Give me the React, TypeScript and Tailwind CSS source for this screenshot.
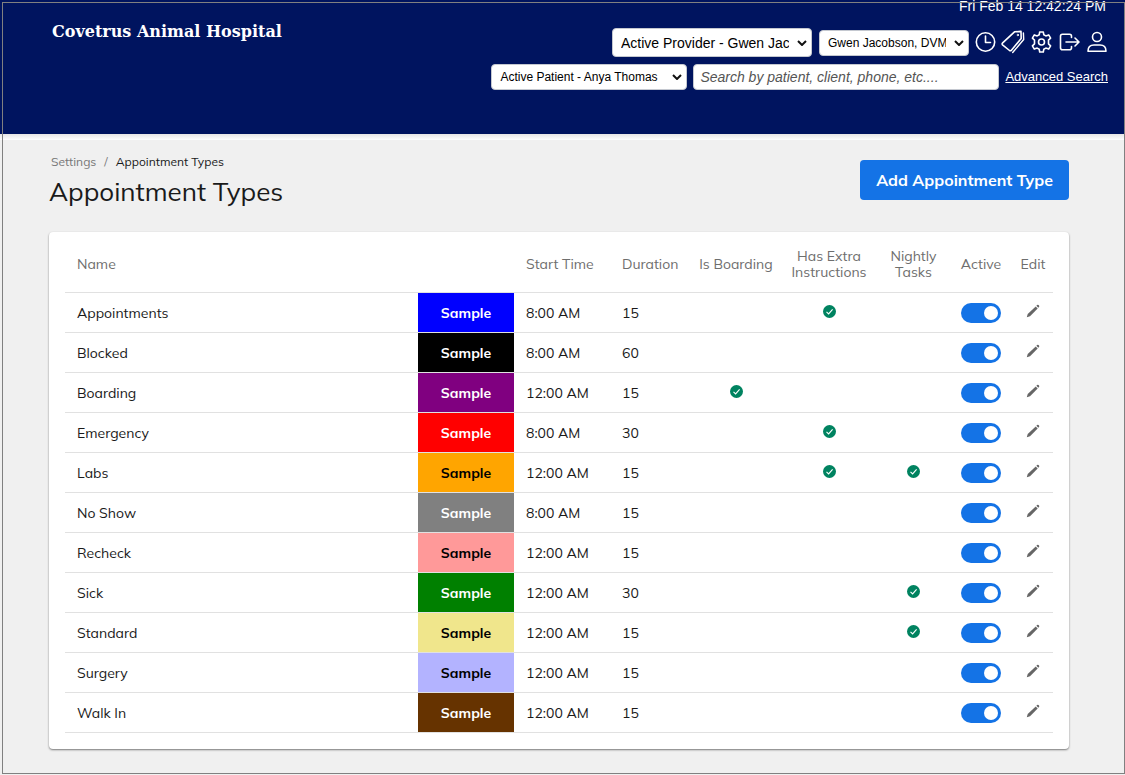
import { ReactNode, useState } from "react";
import clsx from "clsx";

type AppointmentType = {
  name: string;
  color: string;
  start: string;
  duration: number;
  boarding?: boolean;
  extra?: boolean;
  nightly?: boolean;
};

const appointmentTypes: AppointmentType[] = [
  { name: "Appointments", color: "bg-[#0000ff] text-white", start: "8:00 AM", duration: 15, extra: true },
  { name: "Blocked", color: "bg-black text-white", start: "8:00 AM", duration: 60 },
  { name: "Boarding", color: "bg-[#800080] text-white", start: "12:00 AM", duration: 15, boarding: true },
  { name: "Emergency", color: "bg-[#ff0000] text-white", start: "8:00 AM", duration: 30, extra: true },
  { name: "Labs", color: "bg-[#ffa500] text-black", start: "12:00 AM", duration: 15, extra: true, nightly: true },
  { name: "No Show", color: "bg-[#808080] text-white", start: "8:00 AM", duration: 15 },
  { name: "Recheck", color: "bg-[#ff9999] text-black", start: "12:00 AM", duration: 15 },
  { name: "Sick", color: "bg-[#008000] text-white", start: "12:00 AM", duration: 30, nightly: true },
  { name: "Standard", color: "bg-[#f0e68c] text-black", start: "12:00 AM", duration: 15, nightly: true },
  { name: "Surgery", color: "bg-[#b3b3ff] text-black", start: "12:00 AM", duration: 15 },
  { name: "Walk In", color: "bg-[#663300] text-white", start: "12:00 AM", duration: 15 },
];

function HeaderSelect({ label, option, className }: { label: string; option: string; className: string }) {
  return (
    <div className={clsx("relative", className)}>
      <select
        aria-label={label}
        className="h-full w-full appearance-none overflow-hidden rounded border border-[#c4c8d0] bg-white pl-2 pr-[22px] text-black"
      >
        <option>{option}</option>
      </select>
      <svg viewBox="0 0 10 6" className="pointer-events-none absolute right-[5px] top-1/2 h-[6px] w-[10px] -translate-y-1/2">
        <path d="M1 1l4 4 4-4" fill="none" stroke="#111" strokeWidth="2" />
      </svg>
    </div>
  );
}

function IconButton({ label, children }: { label: string; children: ReactNode }) {
  return (
    <button type="button" aria-label={label} className="flex h-6 w-6 items-center justify-center">
      <svg
        viewBox="0 0 24 24"
        className="h-6 w-6"
        fill="none"
        stroke="#fff"
        strokeWidth="1.6"
        strokeLinejoin="round"
        strokeLinecap="round"
      >
        {children}
      </svg>
    </button>
  );
}

function HeaderIcons() {
  return (
    <div className="-ml-[3px] flex items-center gap-1 pb-[2px]">
      <IconButton label="Time clock">
        <circle cx="12.500" cy="12" r="9.200" />
        <path d="M12.500 6v6.500h5" />
      </IconButton>
      <IconButton label="Tags">
        <path d="M13.500 1.800L20 1.400l.2 7-10 12a1.200 1.200 0 0 1-1.700.1L1.500 14.900a1.200 1.200 0 0 1-.1-1.700z" />
        <circle cx="16.800" cy="5" r=".7" strokeWidth="1" />
        <path d="M22.400 3l.3 6.500-11 13" strokeWidth="1.400" />
      </IconButton>
      <IconButton label="Settings">
        <circle cx="12.500" cy="12" r="3" />
        <path d="M10.700 2h3.600l.5 2.800 2 1.100 2.900-1 1.900 3.300-2.100 2v3.600l2.100 2-1.900 3.300-2.900-1-2 1.100-.5 2.800h-3.600l-.5-2.800-2-1.100-2.900 1-1.900-3.300 2.100-2v-3.600l-2.100-2 1.900-3.300 2.900 1 2-1.100z" />
      </IconButton>
      <IconButton label="Log out">
        <path d="M14.500 7.500V6.300a2 2 0 0 0-2-2H5.500a2 2 0 0 0-2 2v11.400a2 2 0 0 0 2 2h7a2 2 0 0 0 2-2v-1.200" />
        <path d="M9 12h12.500M18 8l4 4-4 4" />
      </IconButton>
      <IconButton label="My profile">
        <circle cx="12" cy="7" r="4.500" />
        <path d="M3 21.200c0-4 2.500-6.200 6-6.200h6c3.500 0 6 2.200 6 6.200z" />
      </IconButton>
    </div>
  );
}

function Check({ label }: { label: string }) {
  return (
    <svg viewBox="0 0 13 13" role="img" aria-label={label} className="mx-auto mb-1 h-[13px] w-[13px]">
      <circle cx="6.500" cy="6.500" r="6.500" fill="#008360" />
      <path d="M3.500 6.800l2.100 2.100 4-4.600" fill="none" stroke="#fff" strokeWidth="1.100" />
    </svg>
  );
}

function Pencil() {
  return (
    <svg viewBox="0 0 14 14" className="h-[14px] w-[14px]" fill="#666">
      <path d="M.8 13.200l.9-3.100L9.700 2.400l2 2L4 12.200z" />
      <path d="M10.400 1.800l.7-.7a1 1 0 0 1 1.400 0l.5.500a1 1 0 0 1 0 1.400l-.7.700z" />
    </svg>
  );
}

function ActiveSwitch({ name }: { name: string }) {
  const [active, setActive] = useState(true);

  return (
    <label className="relative mx-auto block h-5 w-10">
      <input
        type="checkbox"
        role="switch"
        aria-label={`${name} active`}
        checked={active}
        onChange={() => setActive(!active)}
        className="peer block h-5 w-10 cursor-pointer appearance-none rounded-full bg-gray-400 checked:bg-[#1473e6]"
      />
      <span className="pointer-events-none absolute left-[3px] top-[3px] h-[14px] w-[14px] rounded-full bg-white peer-checked:left-[23px]" />
    </label>
  );
}

export default function App() {
  return (
    <div className="relative min-h-screen bg-[#f0f0f0] font-['Mulish','Lato',sans-serif] text-[#1a1a1a]">
      <div className="pointer-events-none absolute inset-0 mb-px ml-[2px] mt-[2px] border border-[#808080]" />

      <header className="flex h-[134px] items-start justify-between bg-[#00145f] pl-[52px] pr-4 text-white">
        <h2 className="pt-5 font-['Rockwell','DejaVu_Serif',serif] text-base font-bold leading-6">
          Covetrus Animal Hospital
        </h2>

        <div className="flex flex-col items-end font-['Liberation_Sans',Arial,sans-serif]">
          <time className="pr-[3px] text-sm leading-3">Fri Feb 14 12:42:24 PM</time>

          <div className="mt-4 flex items-center gap-[7px]">
            <HeaderSelect
              label="Active provider"
              option="Active Provider - Gwen Jacobson"
              className="h-[29px] w-[200px] text-sm"
            />
            <HeaderSelect label="User" option="Gwen Jacobson, DVM" className="h-[26px] w-[150px] text-xs" />
            <HeaderIcons />
          </div>

          <div className="mt-[7px] flex items-center gap-[6px] pr-px">
            <HeaderSelect
              label="Active patient"
              option="Active Patient - Anya Thomas"
              className="h-[26px] w-[196px] text-xs"
            />
            <input
              type="search"
              aria-label="Search"
              placeholder="Search by patient, client, phone, etc...."
              className="h-[26px] w-[306px] rounded border border-[#c4c8d0] bg-white px-[6px] text-sm italic text-black placeholder:text-[#555]"
            />
            <a href="#advanced" className="text-[13px] leading-5 underline">
              Advanced Search
            </a>
          </div>
        </div>
      </header>

      <div className="h-[6px] bg-linear-to-b from-[#e6e6e6] to-white" />

      <main className="pl-[49px] pr-14">
        <div className="flex items-start justify-between pt-[14px]">
          <div>
            <nav aria-label="Breadcrumb" className="flex gap-2 pl-[2px] text-xs leading-4">
              <a href="#settings" className="text-[#777]">Settings</a>
              <span className="text-[#777]">/</span>
              <span>Appointment Types</span>
            </nav>
            <h1 className="text-[26px] leading-[44px]">Appointment Types</h1>
          </div>

          <button type="button" className="mt-[6px] h-10 rounded bg-[#1473e6] px-4 text-base font-bold text-white">
            Add Appointment Type
          </button>
        </div>

        <div className="mt-[18px] rounded bg-white px-4 pb-4 pt-1 shadow-[0_1px_2px_rgba(0,0,0,0.5)]">
          <table className="w-full table-fixed border-collapse text-sm leading-4">
            <colgroup>
              <col />
              <col className="w-24" />
              <col className="w-24" />
              <col className="w-[82px]" />
              <col className="w-[88px]" />
              <col className="w-[98px]" />
              <col className="w-[71px]" />
              <col className="w-16" />
              <col className="w-10" />
            </colgroup>
            <thead>
              <tr className="h-14 border-b border-[#e1e1e1] text-[#6e6e6e] *:font-normal">
                <th className="pl-3 text-left">Name</th>
                <td />
                <th className="pl-3 text-left">Start Time</th>
                <th className="pl-3 text-left">Duration</th>
                <th>Is Boarding</th>
                <th>Has Extra Instructions</th>
                <th>Nightly Tasks</th>
                <th>Active</th>
                <th>Edit</th>
              </tr>
            </thead>
            <tbody>
              {appointmentTypes.map((type) => (
                <tr key={type.name} className="h-10 border-b border-[#e1e1e1] *:pt-[2px]">
                  <td className="pl-3">{type.name}</td>
                  <td className={clsx("text-center font-bold", type.color)}>Sample</td>
                  <td className="pl-3">{type.start}</td>
                  <td className="pl-3">{type.duration}</td>
                  <td>{type.boarding && <Check label="Is boarding" />}</td>
                  <td>{type.extra && <Check label="Has extra instructions" />}</td>
                  <td>{type.nightly && <Check label="Nightly tasks" />}</td>
                  <td>
                    <ActiveSwitch name={type.name} />
                  </td>
                  <td>
                    <button type="button" aria-label={`Edit ${type.name}`} className="mx-auto mb-1 block">
                      <Pencil />
                    </button>
                  </td>
                </tr>
              ))}
            </tbody>
          </table>
        </div>
      </main>
    </div>
  );
}
